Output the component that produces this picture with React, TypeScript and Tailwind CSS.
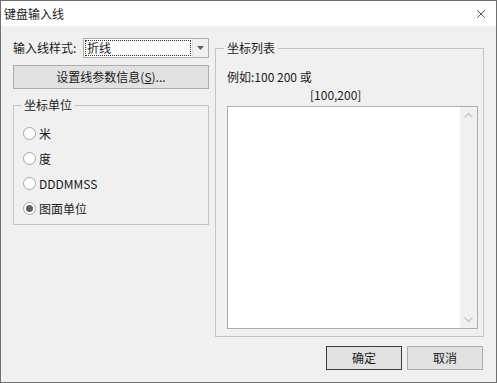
import { X } from "lucide-react";

const font = { fontFamily: '"Noto Sans CJK SC", "Noto Sans", sans-serif' };

const units = ["米", "度", "DDDMMSS", "图面单位"];

function Radio({ label, checked }: { label: string; checked?: boolean }) {
  return (
    <div className="flex h-[25px] items-center">
      <div className="flex h-[13px] w-[13px] items-center justify-center rounded-full border border-[#a8a8a8] bg-white">
        {checked && <div className="h-[7px] w-[7px] rounded-full bg-[#606060]" />}
      </div>
      <span className="ml-[3px] text-[12px] text-[#1a1a1a]">{label}</span>
    </div>
  );
}

export default function App() {
  return (
    <div
      className="flex h-[383px] w-[497px] flex-col border border-[#6f6f6f] bg-[#f0f0f0] text-[12px] leading-none text-[#1a1a1a]"
      style={font}
    >
      {/* Title bar */}
      <div className="flex h-[25px] shrink-0 items-center justify-between bg-white pl-[3px] pr-[8px]">
        <span className="text-[12px]">键盘输入线</span>
        <X className="h-[14px] w-[14px] text-[#222]" strokeWidth={1.3} />
      </div>

      <div className="flex flex-1 flex-col pl-[12px] pr-[12px] pt-[12px]">
        <div className="flex gap-[6px]">
          {/* Left column */}
          <div className="flex w-[196px] flex-col">
            <div className="flex h-[20px] items-center">
              <span className="w-[70px]">输入线样式:</span>
              <div className="flex h-[20px] flex-1 border border-[#adadad] bg-white">
                <div className="m-[1px] flex flex-1 items-center border border-dotted border-[#333] pl-[1px]">
                  折线
                </div>
                <div className="flex w-[16px] items-center justify-center border-l border-[#e0e0e0] bg-[#f0f0f0]">
                  <svg width="7" height="4" viewBox="0 0 7 4">
                    <path d="M0 0h7L3.5 4z" fill="#606060" />
                  </svg>
                </div>
              </div>
            </div>

            <button className="mt-[7px] flex h-[24px] items-center justify-center border border-[#adadad] bg-[#e1e1e1]">
              设置线参数信息(<span className="underline">S</span>)...
            </button>

            <fieldset className="mt-[8px] h-[128px] border border-[#c4c4c4] pl-[9px]">
              <legend className="-ml-[2px] px-[3px] leading-[16px]">坐标单位</legend>
              <div className="mt-[8px] flex flex-col">
                {units.map((u, i) => (
                  <Radio key={u} label={u} checked={i === 3} />
                ))}
              </div>
            </fieldset>
          </div>

          {/* Right column */}
          <fieldset className="mt-[2px] flex h-[297px] flex-1 flex-col border border-[#c4c4c4] pl-[11px] pr-[5px]">
            <legend className="-ml-[3px] px-[3px] leading-[16px]">坐标列表</legend>
            <div className="mt-[13px] leading-[16px]">例如:100 200 或</div>
            <div className="ml-[83px] mt-[2px] leading-[16px]">[100,200]</div>
            <div className="mt-[3px] flex h-[223px] border border-[#adadad] bg-white">
              <div className="flex-1" />
              <div className="flex w-[17px] flex-col items-center justify-between bg-[#f0f0f0] py-[5px]">
                <svg width="9" height="6" viewBox="0 0 9 6">
                  <path d="M0.5 5.5L4.5 1.5L8.5 5.5" stroke="#c8c8c8" strokeWidth="1.4" fill="none" />
                </svg>
                <svg width="9" height="6" viewBox="0 0 9 6">
                  <path d="M0.5 0.5L4.5 4.5L8.5 0.5" stroke="#c8c8c8" strokeWidth="1.4" fill="none" />
                </svg>
              </div>
            </div>
          </fieldset>
        </div>

        {/* Buttons */}
        <div className="mt-[9px] flex justify-end gap-[5px] pr-[1px]">
          <button className="h-[24px] w-[76px] border border-[#3c3c3c] bg-[#e1e1e1]">确定</button>
          <button className="h-[24px] w-[76px] border border-[#adadad] bg-[#e1e1e1]">取消</button>
        </div>
      </div>
    </div>
  );
}
